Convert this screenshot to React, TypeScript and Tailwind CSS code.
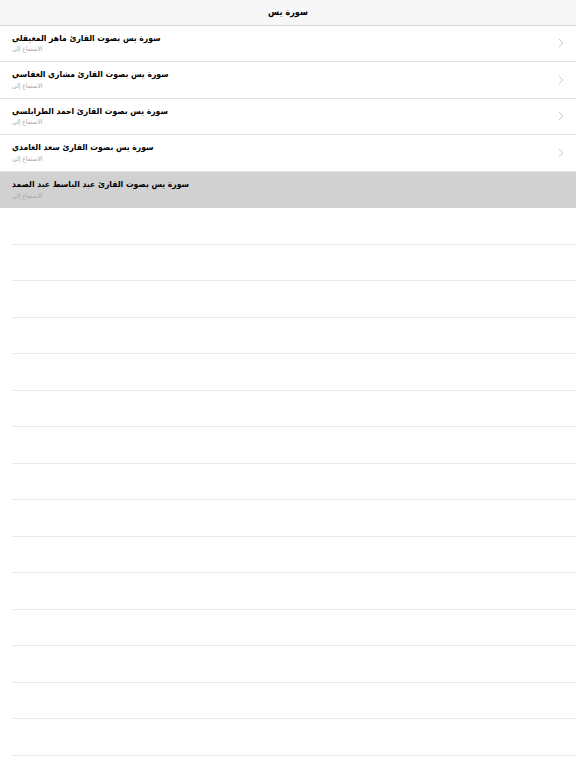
import React from 'react';

const reciters = [
  'ماهر المعيقلي',
  'مشاري العفاسي',
  'احمد الطرابلسي',
  'سعد الغامدي',
  'عبد الباسط عبد الصمد',
];

const Chevron = ({ faded }: { faded?: boolean }) => (
  <svg width="6" height="10" viewBox="0 0 6 10" className={faded ? 'opacity-40' : ''}>
    <path d="M1.2 1.2l3.6 3.8-3.6 3.8" fill="none" stroke="#c9c9cd" strokeWidth="1" strokeLinecap="round" strokeLinejoin="round" />
  </svg>
);

const App: React.FC = () => {
  const selected = 4;

  return (
    <div className="w-[576px] h-[768px] overflow-hidden bg-white" style={{ fontFamily: '"DejaVu Sans Condensed", "DejaVu Sans", sans-serif' }}>
      <header className="h-[25.5px] bg-[#f7f7f7] border-b border-[#d6d6d6] flex items-center justify-center">
        <span dir="rtl" className="text-[9px] font-semibold text-black">سورة يس</span>
      </header>

      <ul>
        {reciters.map((name, i) => (
          <li
            key={name}
            className={`h-[36.5px] flex items-stretch ${i === selected ? 'bg-[#d1d1d1]' : ''}`}
          >
            <div className={`flex-1 flex items-center pl-3 ${i === selected ? '' : 'border-b border-[#e2e2e2]'}`}>
              <div className="flex-1 flex flex-col items-start leading-none">
                <span dir="rtl" className="text-[8.5px] font-bold text-black">سورة يس بصوت القارئ {name}</span>
                <span dir="rtl" className="mt-[4px] text-[6.5px] text-[#a8a8a8]">الاستماع إلى</span>
              </div>
              <div className="w-[18px] flex items-center">
                <Chevron faded={i === selected} />
              </div>
            </div>
          </li>
        ))}
        {Array.from({ length: 15 }).map((_, i) => (
          <li key={i} className="h-[36.5px] pl-3">
            <div className="h-full border-b border-[#e8e8e8]" />
          </li>
        ))}
      </ul>
    </div>
  );
};

export default App;
